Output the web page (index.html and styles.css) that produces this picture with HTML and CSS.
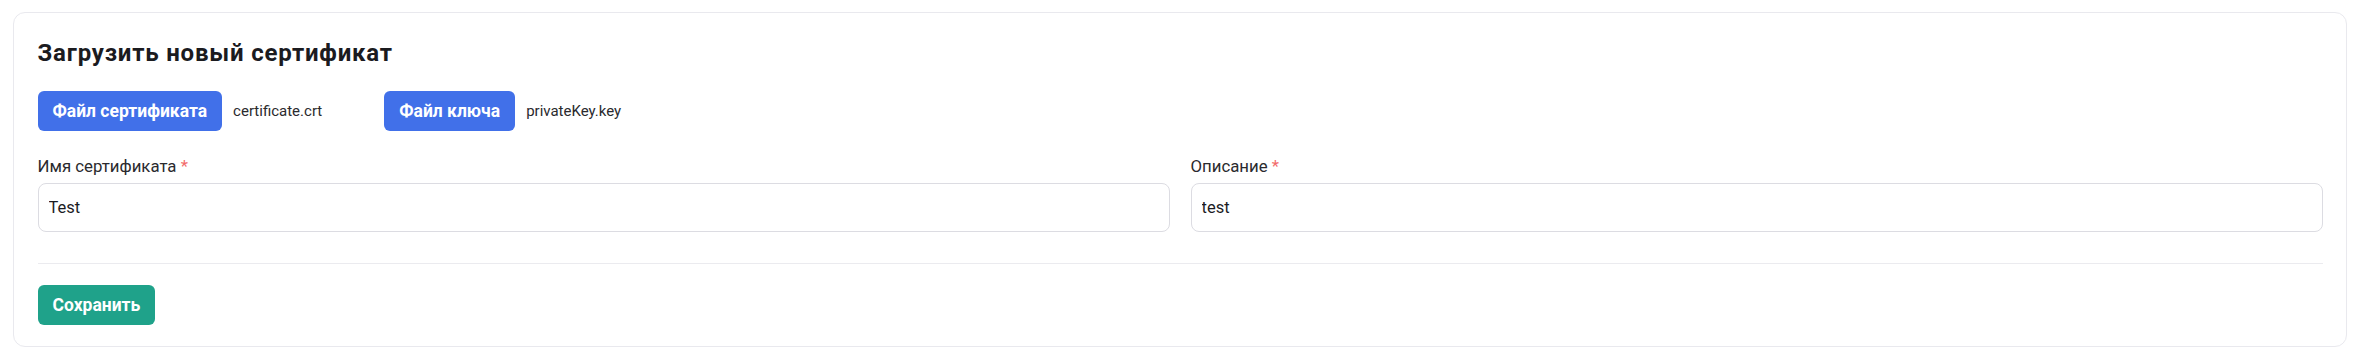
FILE: index.html
```html
<!DOCTYPE html>
<html>
<head>
    <title>Загрузить новый сертификат</title>
    <link rel="stylesheet" href="styles.css">
</head>
<body>
    <div class="card">
        <h3 class="card-title">Загрузить новый сертификат</h3>

        <!-- File pickers -->
        <div class="file-row">
            <div class="file-group">
                <button class="btn btn-primary">Файл сертификата</button>
                <span class="file-name">certificate.crt</span>
            </div>
            <div class="file-group">
                <button class="btn btn-primary">Файл ключа</button>
                <span class="file-name">privateKey.key</span>
            </div>
        </div>

        <div class="form-grid">
            <div class="form-field">
                <label class="form-label">Имя сертификата <span class="required">*</span></label>
                <input class="form-input" type="text" value="Test">
            </div>
            <div class="form-field">
                <label class="form-label">Описание <span class="required">*</span></label>
                <input class="form-input" type="text" value="test">
            </div>
        </div>

        <hr class="divider">

        <button class="btn btn-success">Сохранить</button>
    </div>
</body>
</html>
```

FILE: styles.css
```css
body {
    margin: 0;
    padding: 12px 13px;
    background-color: #fff;
    color: #1b1b1f;
    font-family: Roboto, "Noto Sans", sans-serif;
}
.card {
    border: 1px solid #e9e9ee;
    border-radius: 12px;
    padding: 26px 23.5px 21px;
    background-color: #fff;
}
.card-title {
    margin: 0 0 24px;
    font-size: 24px;
    line-height: 28px;
    font-weight: 700;
    letter-spacing: 0.8px;
}
.file-row {
    display: flex;
    align-items: center;
    gap: 62px;
}
.file-group {
    display: flex;
    align-items: center;
    gap: 11px;
}
.file-name {
    font-size: 15px;
    color: #2a2a2e;
}
.btn {
    height: 40px;
    padding: 0 15px;
    border: none;
    border-radius: 6px;
    color: #fff;
    font-family: inherit;
    font-size: 17.5px;
    font-weight: 700;
    cursor: pointer;
}
.btn-primary {
    background-color: #4170e9;
}
.btn-success {
    background-color: #1fa28a;
}
.form-grid {
    display: grid;
    grid-template-columns: 1fr 1fr;
    gap: 21px;
    margin-top: 25px;
}
.form-label {
    display: block;
    font-size: 16.8px;
    line-height: 20px;
    color: #2a2a2e;
    margin-bottom: 7px;
}
.required {
    color: #f26b6b;
}
.form-input {
    display: block;
    box-sizing: border-box;
    width: 100%;
    height: 49px;
    padding: 0 10px;
    border: 1px solid #dcdce2;
    border-radius: 8px;
    font-family: inherit;
    font-size: 16.5px;
    color: #1b1b1f;
    outline: none;
}
.divider {
    border: none;
    border-top: 1px solid #ebebef;
    margin: 31px 0 21px;
}
```
